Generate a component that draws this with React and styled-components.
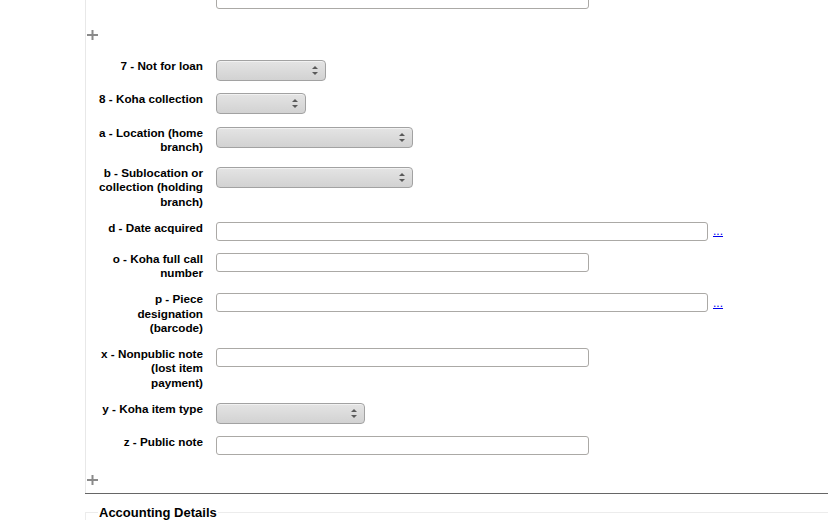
import React from 'react';
import styled, { createGlobalStyle } from 'styled-components';

const GlobalStyle = createGlobalStyle`
  html, body {
    margin: 0;
    padding: 0;
    background: #fff;
  }
  body {
    font-family: "Liberation Sans", Arial, sans-serif;
    color: #000;
    overflow: hidden;
  }
`;

const Page = styled.div`
  padding-left: 85px;
  width: 828px;
  box-sizing: border-box;
`;

// the item subfield block, scrolled so its top is cut off
const ItemBlock = styled.div`
  margin-top: -11px;
  border-left: 1px solid #e8e8e8;
  padding-bottom: 8px;
`;

const FieldList = styled.ol`
  list-style: none;
  margin: 0;
  padding: 0;
`;

const Row = styled.li`
  display: flex;
  align-items: flex-start;
  padding: 0 0 11.5px 11px;
`;

const Label = styled.label`
  flex: 0 0 106px;
  width: 106px;
  margin-right: 13px;
  text-align: right;
  font-size: 11.7px;
  font-weight: bold;
  line-height: 14.4px;
`;

const Controls = styled.div`
  display: flex;
  align-items: baseline;
  margin-top: 1px;
`;

const TextInput = styled.input`
  box-sizing: border-box;
  width: ${p => p.$width}px;
  height: 19px;
  margin: 0;
  padding: 0 4px;
  border: 1px solid #aba9a6;
  border-radius: 3px;
  background: #fff;
  font: 12px "Liberation Sans", Arial, sans-serif;
`;

const SelectBox = styled.div`
  box-sizing: border-box;
  width: ${p => p.$width}px;
  height: 21px;
  display: flex;
  align-items: center;
  justify-content: flex-end;
  padding-right: 7px;
  border: 1px solid #a2a2a2;
  border-radius: 4px;
  background: linear-gradient(#e4e4e4, #d2d2d2);
  box-shadow: inset 0 1px 0 rgba(255, 255, 255, 0.5);
`;

const PickerLink = styled.a`
  margin-left: 5px;
  font-size: 12px;
  color: #0000ee;
  text-decoration: underline;
  cursor: pointer;
`;

const Repeat = styled.div`
  display: flex;
  margin: ${p => p.$before}px 0 ${p => p.$after}px 1px;
  height: 10px;
`;

const Rule = styled.div`
  height: 1px;
  background: #666;
`;

const Fieldset = styled.fieldset`
  margin: 11px 0 0 0;
  padding: 0 0 40px 12px;
  border: 1px solid #ececec;
  border-right: none;
  border-bottom: none;
`;

const Legend = styled.legend`
  padding: 0 1px;
  font-size: 13px;
  font-weight: bold;
`;

const Arrows = () => (
  <svg width="6" height="11" viewBox="0 0 6 11">
    <path d="M0 4 L3 1 L6 4 Z" fill="#5a5a5a" />
    <path d="M0 7 L3 10 L6 7 Z" fill="#5a5a5a" />
  </svg>
);

const Plus = () => (
  <svg width="11" height="10" viewBox="0 0 11 10">
    <path d="M0 5 H11 M5.5 0 V10" stroke="#8a8a8a" strokeWidth="2" />
  </svg>
);

const fields = [
  { label: '7 - Not for loan', type: 'select', width: 110 },
  { label: '8 - Koha collection', type: 'select', width: 90 },
  { label: 'a - Location (home branch)', type: 'select', width: 197 },
  { label: 'b - Sublocation or collection (holding branch)', type: 'select', width: 197 },
  { label: 'd - Date acquired', type: 'text', width: 492, picker: true },
  { label: 'o - Koha full call number', type: 'text', width: 373 },
  { label: 'p - Piece designation (barcode)', type: 'text', width: 492, picker: true },
  { label: 'x - Nonpublic note (lost item payment)', type: 'text', width: 373 },
  { label: 'y - Koha item type', type: 'select', width: 149 },
  { label: 'z - Public note', type: 'text', width: 373 },
];

const Field = ({ label, type, width, picker }) => (
  <Row>
    <Label>{label}</Label>
    <Controls>
      {type === 'select' ? (
        <SelectBox $width={width}>
          <Arrows />
        </SelectBox>
      ) : (
        <TextInput type="text" $width={width} />
      )}
      {picker && <PickerLink>...</PickerLink>}
    </Controls>
  </Row>
);

export default function App() {
  return (
    <Page>
      <GlobalStyle />
      <ItemBlock>
        <FieldList>
          <Field label="z - Public note" type="text" width={373} />
        </FieldList>
        <Repeat $before={9} $after={19}>
          <Plus />
        </Repeat>
        <FieldList>
          {fields.map(f => (
            <Field key={f.label} {...f} />
          ))}
        </FieldList>
        <Repeat $before={8} $after={0}>
          <Plus />
        </Repeat>
      </ItemBlock>
      <Rule />
      <Fieldset>
        <Legend>Accounting Details</Legend>
      </Fieldset>
    </Page>
  );
}
